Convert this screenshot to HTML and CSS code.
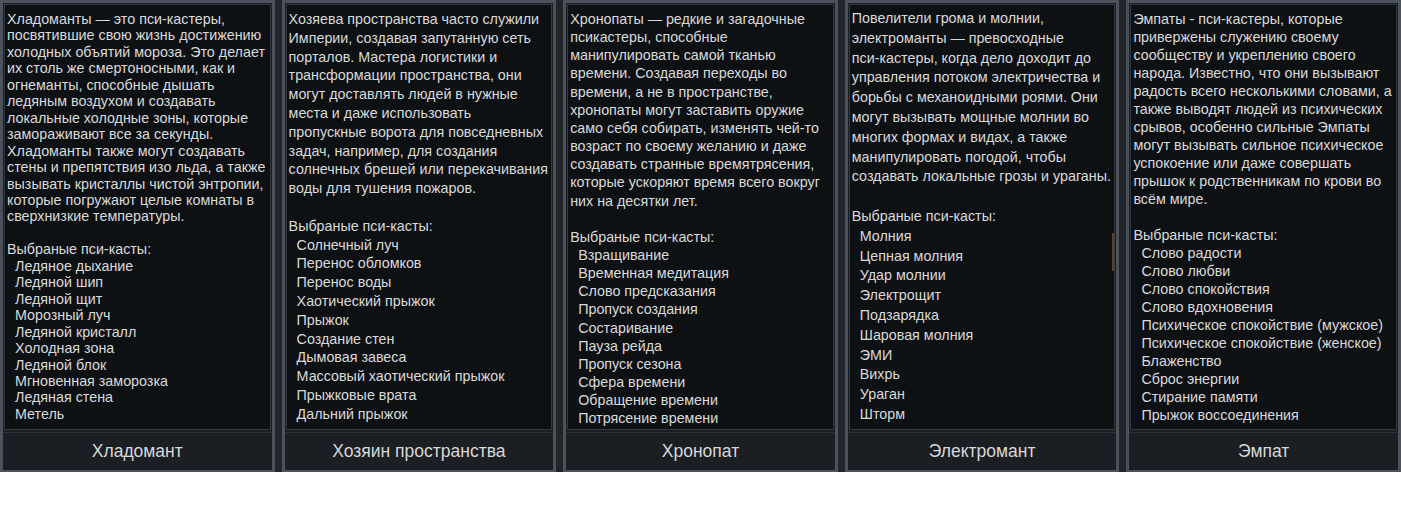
FILE: index.html
```html
<!DOCTYPE html>
<html>

<head>
    <title>Пси-касты</title>
    <meta charset="utf-8">
    <meta name="viewport" content="width=device-width, initial-scale=1">
    <link rel="stylesheet" href="styles.css">
</head>

<body>
    <div class="classes">
        <div class="card cryo">
            <div class="desc">
                <div class="lore">Хладоманты — это пси-кастеры,<br>посвятившие свою жизнь достижению<br>холодных объятий мороза. Это делает<br>их столь же смертоносными, как и<br>огнеманты, способные дышать<br>ледяным воздухом и создавать<br>локальные холодные зоны, которые<br>замораживают все за секунды.<br>Хладоманты также могут создавать<br>стены и препятствия изо льда, а также<br>вызывать кристаллы чистой энтропии,<br>которые погружают целые комнаты в<br>сверхнизкие температуры.</div>
                <div class="psy-title">Выбраные пси-касты:</div>
                <ul class="psy-list">
                    <li>Ледяное дыхание</li>
                    <li>Ледяной шип</li>
                    <li>Ледяной щит</li>
                    <li>Морозный луч</li>
                    <li>Ледяной кристалл</li>
                    <li>Холодная зона</li>
                    <li>Ледяной блок</li>
                    <li>Мгновенная заморозка</li>
                    <li>Ледяная стена</li>
                    <li>Метель</li>
                </ul>
            </div>
            <div class="name">Хладомант</div>
        </div>

        <div class="card skip">
            <div class="desc">
                <div class="lore">Хозяева пространства часто служили<br>Империи, создавая запутанную сеть<br>порталов. Мастера логистики и<br>трансформации пространства, они<br>могут доставлять людей в нужные<br>места и даже использовать<br>пропускные ворота для повседневных<br>задач, например, для создания<br>солнечных брешей или перекачивания<br>воды для тушения пожаров.</div>
                <div class="psy-title">Выбраные пси-касты:</div>
                <ul class="psy-list">
                    <li>Солнечный луч</li>
                    <li>Перенос обломков</li>
                    <li>Перенос воды</li>
                    <li>Хаотический прыжок</li>
                    <li>Прыжок</li>
                    <li>Создание стен</li>
                    <li>Дымовая завеса</li>
                    <li>Массовый хаотический прыжок</li>
                    <li>Прыжковые врата</li>
                    <li>Дальний прыжок</li>
                </ul>
            </div>
            <div class="name">Хозяин пространства</div>
        </div>

        <div class="card chrono">
            <div class="desc">
                <div class="lore">Хронопаты — редкие и загадочные<br>псикастеры, способные<br>манипулировать самой тканью<br>времени. Создавая переходы во<br>времени, а не в пространстве,<br>хронопаты могут заставить оружие<br>само себя собирать, изменять чей-то<br>возраст по своему желанию и даже<br>создавать странные времятрясения,<br>которые ускоряют время всего вокруг<br>них на десятки лет.</div>
                <div class="psy-title">Выбраные пси-касты:</div>
                <ul class="psy-list">
                    <li>Взращивание</li>
                    <li>Временная медитация</li>
                    <li>Слово предсказания</li>
                    <li>Пропуск создания</li>
                    <li>Состаривание</li>
                    <li>Пауза рейда</li>
                    <li>Пропуск сезона</li>
                    <li>Сфера времени</li>
                    <li>Обращение времени</li>
                    <li>Потрясение времени</li>
                </ul>
            </div>
            <div class="name">Хронопат</div>
        </div>

        <div class="card electro">
            <div class="desc">
                <div class="lore">Повелители грома и молнии,<br>электроманты — превосходные<br>пси-кастеры, когда дело доходит до<br>управления потоком электричества и<br>борьбы с механоидными роями. Они<br>могут вызывать мощные молнии во<br>многих формах и видах, а также<br>манипулировать погодой, чтобы<br>создавать локальные грозы и ураганы.</div>
                <div class="psy-title">Выбраные пси-касты:</div>
                <ul class="psy-list">
                    <li>Молния</li>
                    <li>Цепная молния</li>
                    <li>Удар молнии</li>
                    <li>Электрощит</li>
                    <li>Подзарядка</li>
                    <li>Шаровая молния</li>
                    <li>ЭМИ</li>
                    <li>Вихрь</li>
                    <li>Ураган</li>
                    <li>Шторм</li>
                </ul>
                <div class="scroll-thumb"></div>
            </div>
            <div class="name">Электромант</div>
        </div>

        <div class="card empath">
            <div class="desc">
                <div class="lore">Эмпаты - пси-кастеры, которые<br>привержены служению своему<br>сообществу и укреплению своего<br>народа. Известно, что они вызывают<br>радость всего несколькими словами, а<br>также выводят людей из психических<br>срывов, особенно сильные Эмпаты<br>могут вызывать сильное психическое<br>успокоение или даже совершать<br>прышок к родственникам по крови во<br>всём мире.</div>
                <div class="psy-title">Выбраные пси-касты:</div>
                <ul class="psy-list">
                    <li>Слово радости</li>
                    <li>Слово любви</li>
                    <li>Слово спокойствия</li>
                    <li>Слово вдохновения</li>
                    <li>Психическое спокойствие (мужское)</li>
                    <li>Психическое спокойствие (женское)</li>
                    <li>Блаженство</li>
                    <li>Сброс энергии</li>
                    <li>Стирание памяти</li>
                    <li>Прыжок воссоединения</li>
                </ul>
            </div>
            <div class="name">Эмпат</div>
        </div>
    </div>
</body>

</html>
```

FILE: styles.css
```css
body {
    margin: 0;
    background-color: #FFFFFF;
    font-family: "Liberation Sans", Arial, sans-serif;
}

.classes {
    display: flex;
    gap: 7px;
    height: 472px;
    background-color: #22262B;
}

.card {
    flex: 1;
    display: flex;
    flex-direction: column;
    min-width: 0;
    border: 3px solid #4B525B;
    border-bottom-width: 2px;
    background-color: #1B1E22;
}

.desc {
    position: relative;
    flex-grow: 1;
    margin: 1px 1px 2px 1px;
    padding: 5px 0 0 2px;
    border: 1px solid #33383F;
    background-color: #0E1114;
    color: #DADADA;
    font-size: 14.3px;
    line-height: 18px;
    white-space: nowrap;
    overflow: hidden;
}

.lore {
    margin-bottom: 1lh;
}

.psy-list {
    list-style: none;
    margin: 0;
    padding: 0 0 0 8px;
}

/* each class page stretches its lines to fill the box */
.cryo .desc {
    line-height: 16.45px;
    padding-top: 6px;
}

.skip .desc {
    line-height: 18.8px;
}

.chrono .desc {
    line-height: 18.15px;
}

.electro .desc {
    line-height: 19.8px;
    padding-top: 4px;
}

.empath .desc {
    line-height: 18px;
}

.scroll-thumb {
    position: absolute;
    right: 0;
    top: 228px;
    width: 2px;
    height: 38px;
    background-color: #5E4322;
}

.name {
    height: 37px;
    line-height: 37px;
    border-top: 1px solid #2C3137;
    text-align: center;
    font-size: 17.5px;
    color: #D8D8D8;
}
```
